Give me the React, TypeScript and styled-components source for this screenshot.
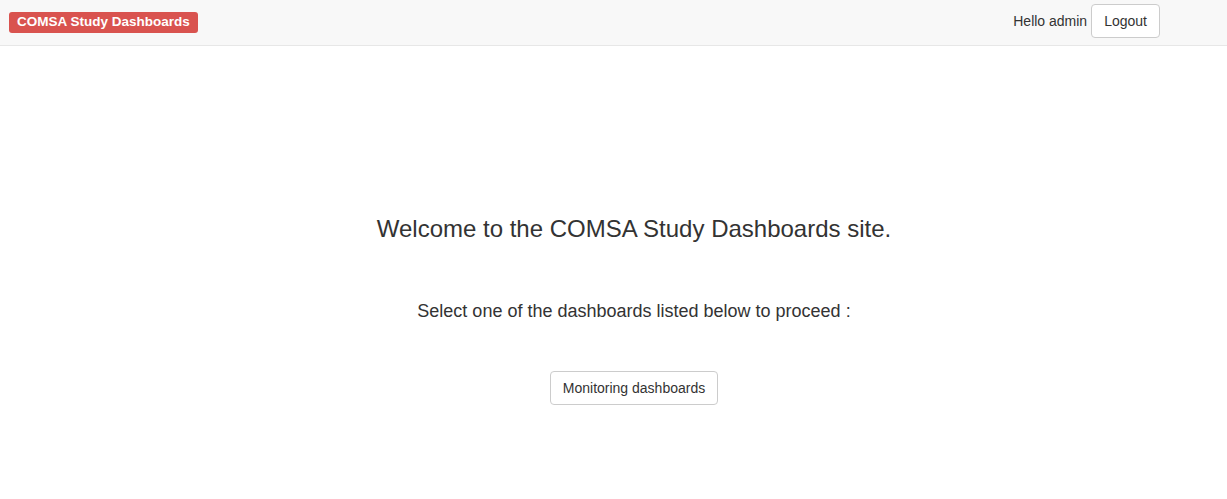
import styled, { createGlobalStyle } from "styled-components";

const GlobalStyle = createGlobalStyle`
    html, body {
        margin: 0;
        padding: 0;
        background: #fff;
    }
    body {
        font-family: "Liberation Sans", Arial, Helvetica, sans-serif;
        font-size: 14px;
        line-height: 20px;
        color: #333;
    }
`;

const NavBar = styled.div`
    display: flex;
    flex-direction: row;
    align-items: flex-start;
    justify-content: space-between;
    height: 45px;
    padding: 0 67px 0 9px;
    background: #f8f8f8;
    border-bottom: 1px solid #e7e7e7;
`;

const BrandLabel = styled.span`
    margin-top: 12px;
    display: inline-block;
    padding: 3px 8px 4px 8px;
    font-size: 13.5px;
    line-height: 14px;
    font-weight: bold;
    color: #fff;
    background: #d9534f;
    border-radius: 3px;
    white-space: nowrap;
`;

const UserBox = styled.div`
    display: flex;
    flex-direction: row;
    align-items: flex-start;
    gap: 4px;
    padding-top: 4px;
`;

const Greeting = styled.span`
    padding-top: 7px;
    line-height: 20px;
`;

const Button = styled.button`
    display: inline-block;
    padding: 6px 12px;
    font-family: inherit;
    font-size: 14px;
    line-height: 20px;
    color: #333;
    background: #fff;
    border: 1px solid #ccc;
    border-radius: 4px;
    cursor: pointer;
    white-space: nowrap;
`;

const Main = styled.div`
    display: flex;
    flex-direction: column;
    align-items: center;
    padding: 170px 0 0 41px;
`;

const Title = styled.h3`
    margin: 0;
    font-size: 24px;
    line-height: 26px;
    font-weight: normal;
`;

const Subtitle = styled.p`
    margin: 59px 0 0 0;
    font-size: 18px;
    line-height: 20px;
`;

const DashboardList = styled.div`
    margin-top: 50px;
    display: flex;
    flex-direction: column;
    align-items: center;
`;

const App = () => {
    return (
        <>
            <GlobalStyle />
            <NavBar>
                <BrandLabel>COMSA Study Dashboards</BrandLabel>
                <UserBox>
                    <Greeting>Hello admin</Greeting>
                    <Button>Logout</Button>
                </UserBox>
            </NavBar>
            <Main>
                <Title>Welcome to the COMSA Study Dashboards site.</Title>
                <Subtitle>Select one of the dashboards listed below to proceed :</Subtitle>
                <DashboardList>
                    <Button>Monitoring dashboards</Button>
                </DashboardList>
            </Main>
        </>
    );
};

export default App;
